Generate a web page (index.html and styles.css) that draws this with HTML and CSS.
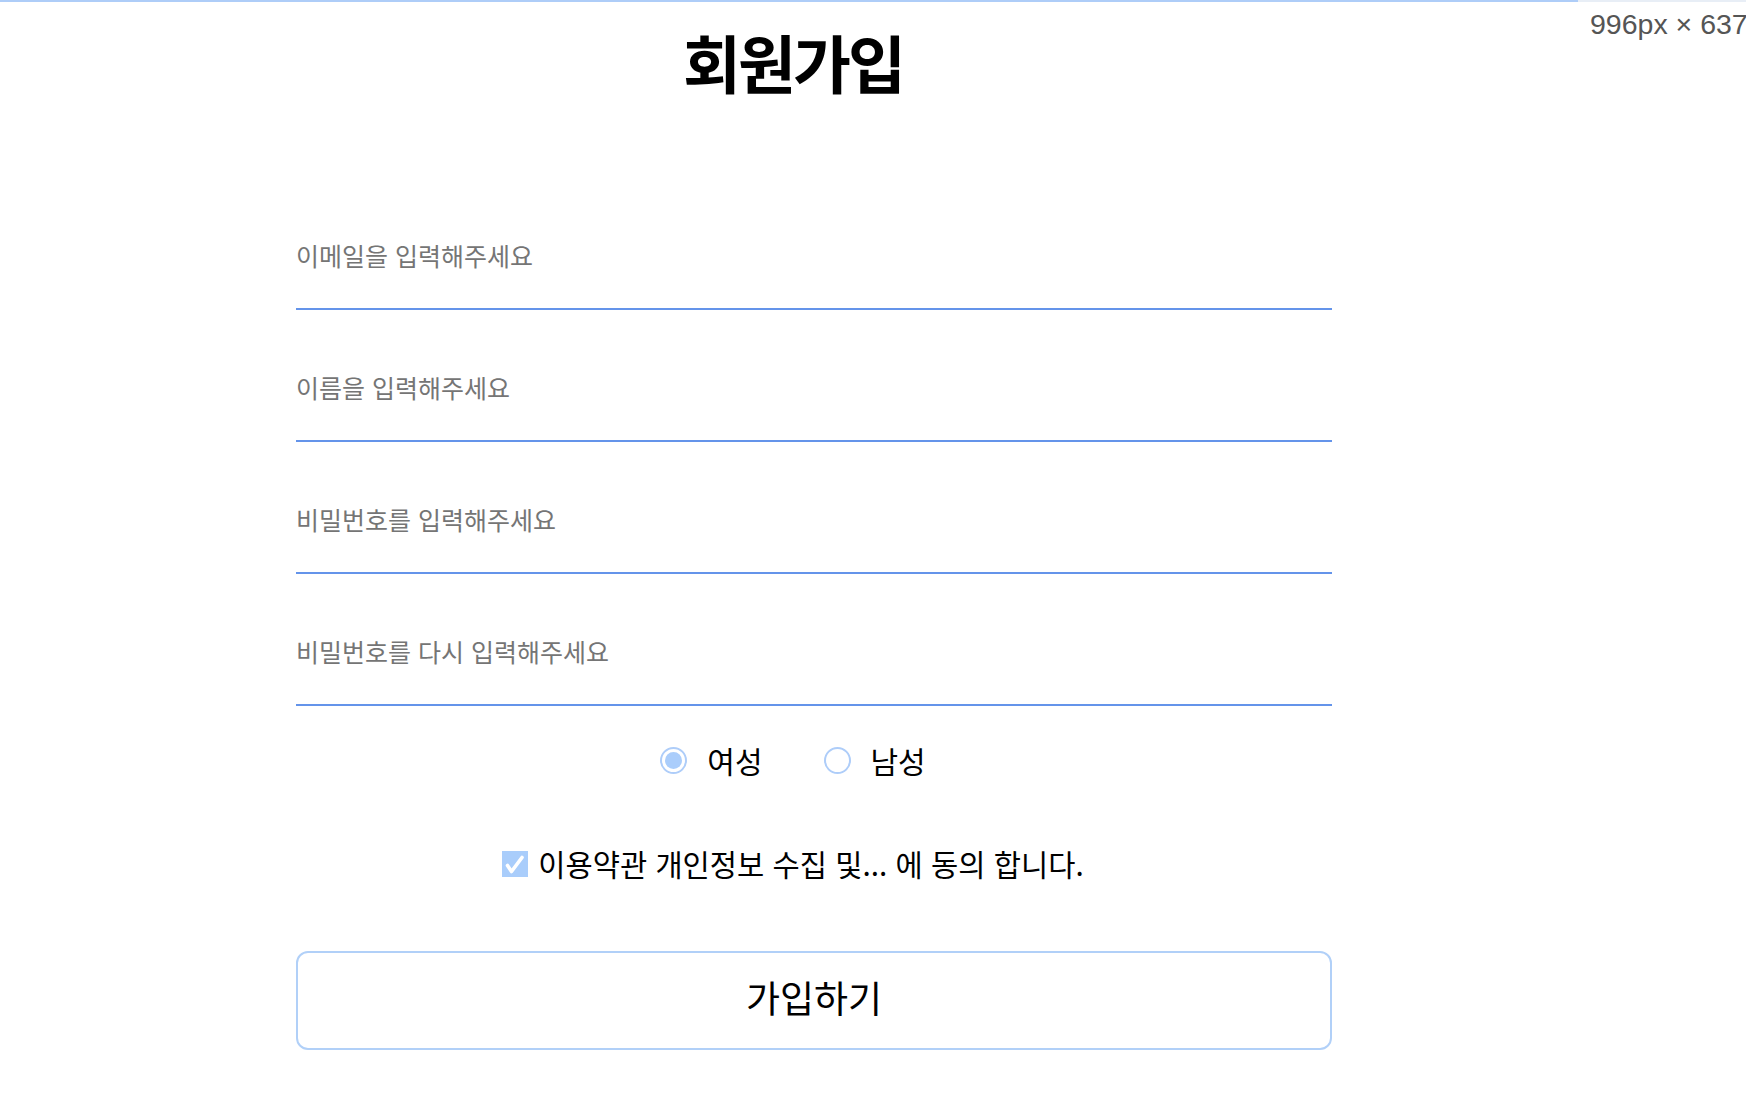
FILE: index.html
```html
<!DOCTYPE html>
<html lang="ko">
<head>
<meta charset="utf-8">
<title>회원가입</title>
<link rel="stylesheet" href="styles.css">
</head>
<body>
<div class="topline"></div>
<div class="size-badge">996px × 637</div>
<main class="page">
  <h1 class="title">회원가입</h1>
  <form class="signup">
    <div class="fields">
      <input class="field" type="email" placeholder="이메일을 입력해주세요">
      <input class="field" type="text" placeholder="이름을 입력해주세요">
      <input class="field" type="password" placeholder="비밀번호를 입력해주세요">
      <input class="field" type="password" placeholder="비밀번호를 다시 입력해주세요">
    </div>
    <div class="genders">
      <label class="gender"><span class="radio checked"></span><span class="gender-text">여성</span></label>
      <label class="gender"><span class="radio"></span><span class="gender-text">남성</span></label>
    </div>
    <div class="agree">
      <span class="checkbox">
        <svg width="26" height="26" viewBox="0 0 26 26"><path d="M5.5 14.5 L9.5 20.5 L20 6.5" fill="none" stroke="#ffffff" stroke-width="3.6" stroke-linecap="round" stroke-linejoin="round"/></svg>
      </span>
      <span class="agree-text">이용약관 개인정보 수집 및... 에 동의 합니다.</span>
    </div>
    <div class="actions">
      <button class="submit" type="button">가입하기</button>
    </div>
  </form>
</main>
</body>
</html>
```
FILE: styles.css
```css
html, body {
  margin: 0;
  padding: 0;
  background: #ffffff;
  overflow-x: hidden;
}
body {
  font-family: "Noto Sans CJK KR", "Noto Sans", sans-serif;
  color: #000;
  position: relative;
  min-height: 1113px;
}
.topline {
  position: absolute;
  top: 0;
  left: 0;
  right: 0;
  height: 2px;
  background: linear-gradient(to right, #aecdf8 0, #aecdf8 1578px, #e8eef6 1578px, #e8eef6 100%);
}
.size-badge {
  position: absolute;
  top: 7px;
  left: 1590px;
  white-space: nowrap;
  font-family: "Liberation Sans", Arial, sans-serif;
  font-size: 28.5px;
  line-height: 34px;
  color: #555555;
}
.page {
  width: 1586px;
  padding-top: 21px;
}
.title {
  margin: 0;
  text-align: center;
  font-size: 63px;
  font-weight: 700;
  line-height: 80px;
  letter-spacing: -3px;
}
.fields {
  margin-left: 296px;
  width: 1036px;
  padding-top: 136px;
  display: flex;
  flex-direction: column;
  gap: 59px;
}
.field {
  display: block;
  box-sizing: border-box;
  width: 100%;
  height: 73px;
  margin: 0;
  padding: 0 0 35px 0;
  border: none;
  border-bottom: 2px solid #6494ea;
  outline: none;
  background: transparent;
  font-family: "Noto Sans CJK KR", sans-serif;
  font-size: 25px;
  line-height: 36px;
  color: #000;
}
.field::placeholder {
  color: #757575;
}
.genders {
  display: flex;
  justify-content: center;
  gap: 61px;
  margin-top: 37px;
  height: 34px;
  align-items: center;
}
.gender {
  display: flex;
  align-items: center;
  gap: 20px;
}
.radio {
  box-sizing: border-box;
  width: 27px;
  height: 27px;
  border-radius: 50%;
  border: 2.5px solid #aecdf9;
  background: #fff;
  position: relative;
}
.radio.checked::after {
  content: "";
  position: absolute;
  left: 3px;
  top: 3px;
  right: 3px;
  bottom: 3px;
  border-radius: 50%;
  background: #aacdfb;
}
.gender-text {
  font-size: 30px;
  line-height: 34px;
}
.agree {
  display: flex;
  justify-content: center;
  align-items: center;
  gap: 10px;
  margin-top: 70px;
  height: 34px;
}
.checkbox {
  width: 26px;
  height: 26px;
  background: #a9cdfb;
  display: block;
}
.checkbox svg {
  display: block;
}
.agree-text {
  font-size: 29.6px;
  line-height: 34px;
}
.actions {
  margin-left: 296px;
  width: 1036px;
  margin-top: 70px;
}
.submit {
  display: block;
  box-sizing: border-box;
  width: 100%;
  height: 99px;
  border: 2px solid #b1d0f8;
  border-radius: 12px;
  background: #ffffff;
  font-family: "Noto Sans CJK KR", sans-serif;
  font-size: 37px;
  color: #000;
  padding: 0 0 7px 0;
  cursor: pointer;
}
```
